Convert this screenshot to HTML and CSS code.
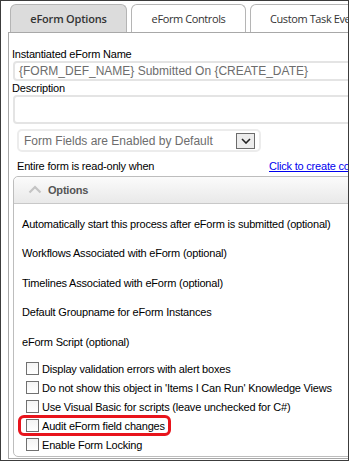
FILE: index.html
```html
<!DOCTYPE html>
<html>
<head>
<meta charset="utf-8">
<link rel="stylesheet" href="styles.css">
</head>
<body>
<div class="frame">
  <div class="tabs">
    <div class="tab active">eForm Options</div>
    <div class="tab">eForm Controls</div>
    <div class="tab wide">Custom Task Events</div>
  </div>
  <div class="panel">
    <div class="label">Instantiated eForm Name</div>
    <div class="input">{FORM_DEF_NAME} Submitted On {CREATE_DATE}</div>
    <div class="label">Description</div>
    <div class="textarea"></div>
    <div class="select">
      <span class="select-text">Form Fields are Enabled by Default</span>
      <span class="select-btn">
        <svg width="10" height="6" viewBox="0 0 10 6"><path d="M1 1 L5 5 L9 1" fill="none" stroke="#222" stroke-width="1.6"/></svg>
      </span>
    </div>
    <div class="readonly-row">
      <span class="readonly-text">Entire form is read-only when</span>
      <a class="link" href="#">Click to create condition</a>
    </div>
    <div class="options">
      <div class="options-head">
        <svg class="chev" width="14" height="9" viewBox="0 0 14 9"><path d="M1.5 7.5 L7 2 L12.5 7.5" fill="none" stroke="#c4c4c4" stroke-width="2.2"/></svg>
        <span class="options-title">Options</span>
      </div>
      <div class="options-body">
        <div class="row">Automatically start this process after eForm is submitted (optional)</div>
        <div class="row">Workflows Associated with eForm (optional)</div>
        <div class="row">Timelines Associated with eForm (optional)</div>
        <div class="row">Default Groupname for eForm Instances</div>
        <div class="row">eForm Script (optional)</div>
        <div class="checks">
          <div class="check"><span class="box"></span>Display validation errors with alert boxes</div>
          <div class="check"><span class="box"></span>Do not show this object in 'Items I Can Run' Knowledge Views</div>
          <div class="check"><span class="box"></span>Use Visual Basic for scripts (leave unchecked for C#)</div>
          <div class="check highlighted"><span class="box"></span>Audit eForm field changes<span class="mark"></span></div>
          <div class="check"><span class="box"></span>Enable Form Locking</div>
        </div>
      </div>
    </div>
  </div>
</div>
</body>
</html>
```

FILE: styles.css
```css
html, body {
  margin: 0;
  padding: 0;
  background: #fff;
}

.frame {
  width: 349px;
  height: 461px;
  box-sizing: border-box;
  border: 1px solid #3c3c3c;
  overflow: hidden;
  background: #fff;
  font-family: "Liberation Sans", Arial, sans-serif;
  font-size: 11px;
  letter-spacing: -0.2px;
  color: #000;
}

.tabs {
  display: flex;
  gap: 4px;
  margin: 3px 0 0 9px;
  width: 600px;
}

.tab {
  height: 28px;
  box-sizing: border-box;
  width: 115px;
  border: 1px solid #b5b5b5;
  border-bottom: none;
  border-radius: 6px 6px 0 0;
  background: #fff;
  font-family: "Open Sans", "Noto Sans", sans-serif;
  font-size: 11px;
  letter-spacing: -0.4px;
  color: #333;
  display: flex;
  align-items: center;
  justify-content: center;
  flex: none;
}

.tab.active {
  width: 117px;
  background: #dcdcdc;
  font-weight: 600;
  letter-spacing: -0.2px;
  color: #333;
}

.tab.wide {
  width: 160px;
  justify-content: flex-start;
  padding-left: 19px;
}

.panel {
  margin-left: 7px;
  width: 600px;
  height: 427px;
  box-sizing: border-box;
  border-top: 1px solid #a8a8a8;
  border-left: 1px solid #a8a8a8;
  border-bottom: 1px solid #a8a8a8;
  padding: 14px 0 0 3px;
}

.label {
  line-height: 14px;
  height: 14px;
}

.input {
  margin-left: 1px;
  height: 20px;
  box-sizing: border-box;
  border: 2px solid #e4e4e4;
  border-radius: 4px;
  padding-left: 4px;
  font-size: 12px;
  letter-spacing: 0;
  line-height: 16px;
  color: #6d6d6d;
}

.textarea {
  margin-left: 1px;
  height: 29px;
  box-sizing: border-box;
  border: 2px solid #e4e4e4;
  border-radius: 4px;
}

.select {
  margin: 5px 0 0 5px;
  width: 244px;
  height: 23px;
  box-sizing: border-box;
  border: 2px solid #ececec;
  border-radius: 5px;
  display: flex;
  align-items: center;
  padding-left: 5px;
}

.select-text {
  font-size: 12px;
  letter-spacing: 0;
  color: #6d6d6d;
  flex: 1;
}

.select-btn {
  width: 19px;
  height: 16px;
  box-sizing: border-box;
  border: 1px solid #6b6b6b;
  background: #ececec;
  margin-right: 4px;
  display: flex;
  align-items: center;
  justify-content: center;
}

.readonly-row {
  margin: 7px 0 0 5px;
  display: flex;
  line-height: 14px;
}

.readonly-text {
  width: 252px;
  flex: none;
}

.link {
  color: #0000ee;
  text-decoration: underline;
  white-space: nowrap;
}

.options {
  margin: 3px 0 0 1px;
  width: 500px;
  height: 281px;
  box-sizing: border-box;
  border: 1px solid #bdbdbd;
  border-radius: 5px;
}

.options-head {
  height: 27px;
  box-sizing: border-box;
  border-bottom: 1px solid #c8c8c8;
  background: linear-gradient(#fbfbfb, #e9e9e9);
  border-radius: 5px 5px 0 0;
  display: flex;
  align-items: center;
  padding-left: 14px;
}

.chev {
  margin-right: 6px;
  margin-top: -1px;
}

.options-title {
  font-weight: bold;
  font-size: 11px;
  color: #555;
}

.options-body {
  padding: 5px 0 0 8px;
}

.row {
  height: 29.5px;
  display: flex;
  align-items: center;
}

.checks {
  margin-top: 2.75px;
  padding-left: 4px;
}

.check {
  height: 19px;
  display: flex;
  align-items: center;
  position: relative;
}

.box {
  width: 13px;
  height: 13px;
  box-sizing: border-box;
  border: 1px solid #707070;
  background: linear-gradient(#f4f4f4, #fff);
  margin-right: 3px;
  flex: none;
}

.mark {
  position: absolute;
  left: -8px;
  top: -1px;
  width: 153px;
  height: 21px;
  box-sizing: border-box;
  border: 3px solid #e8141c;
  border-radius: 6px;
}
```
